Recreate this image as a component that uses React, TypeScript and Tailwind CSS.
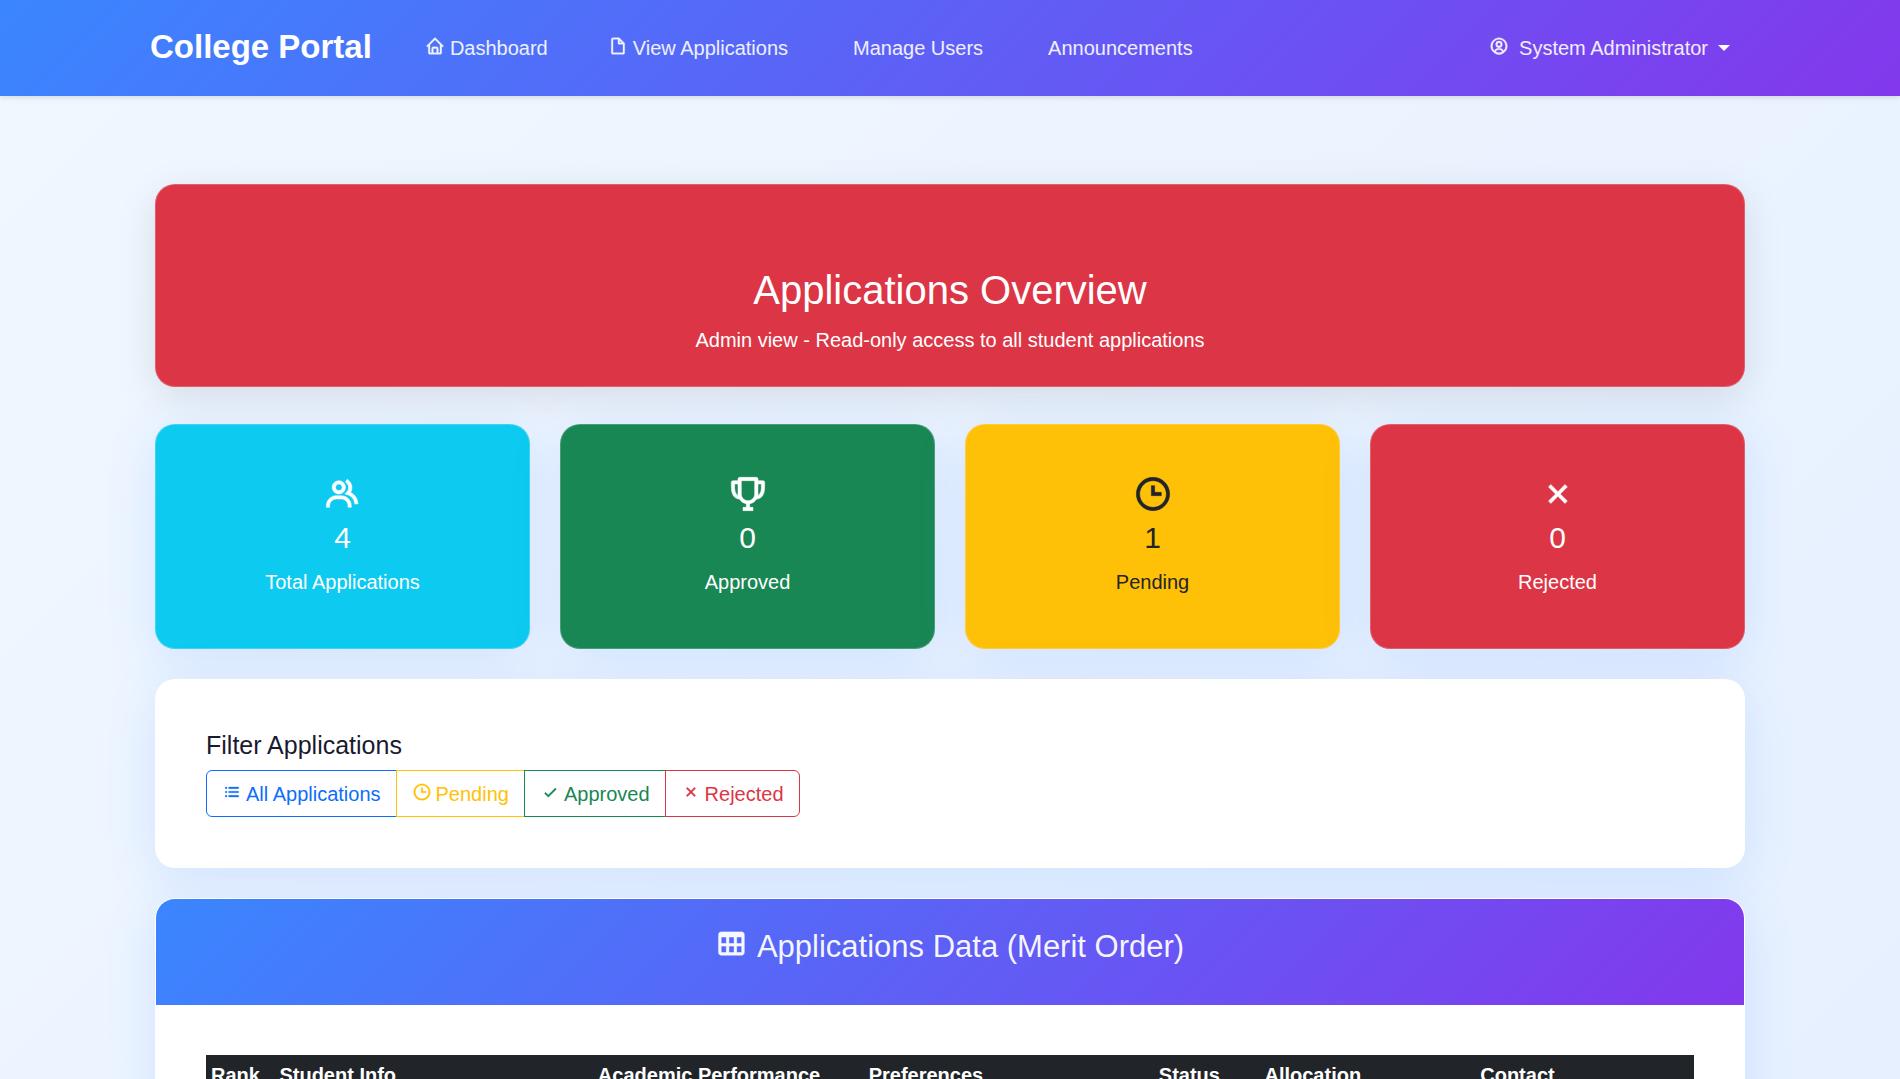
import type { ReactNode } from "react";
import type { IconType } from "react-icons";
import {
  BiCheck,
  BiFileBlank,
  BiGroup,
  BiHome,
  BiListUl,
  BiTable,
  BiTime,
  BiTrophy,
  BiUserCircle,
  BiX,
} from "react-icons/bi";

const cardBase =
  "relative rounded-[20px] border border-white/20 shadow-[0_10px_50px_rgba(58,134,255,0.15)]";

function NavLink({ icon: Icon, children }: { icon?: IconType; children: ReactNode }) {
  return (
    <a href="#" className="whitespace-nowrap text-white/90 hover:text-white">
      {Icon && <Icon className="inline stroke-[0.4] align-[-1px]" aria-hidden="true" />}
      <span className="ml-[5px]">{children}</span>
    </a>
  );
}

function Navbar() {
  return (
    <nav className="relative bg-[linear-gradient(135deg,#3a86ff,#8338ec)] pt-[23px] pb-[25px] shadow-[0_2px_5px_rgba(0,0,0,0.1)]">
      <div className="mx-auto flex max-w-[1600px] items-center">
        <a href="#" className="text-[33px] leading-[48px] font-bold whitespace-nowrap text-white">
          College Portal
        </a>
        <div className="ml-[53px] flex items-center gap-[60px] pt-0.5">
          <NavLink icon={BiHome}>Dashboard</NavLink>
          <NavLink icon={BiFileBlank}>View Applications</NavLink>
          <NavLink>Manage Users</NavLink>
          <NavLink>Announcements</NavLink>
        </div>
        <button type="button" className="mr-5 ml-auto flex items-center gap-2.5 pt-0.5 text-white/90">
          <span className="whitespace-nowrap">
            <BiUserCircle className="mr-2.5 inline stroke-[0.4] align-[-1px]" aria-hidden="true" />
            System Administrator
          </span>
          <span className="border-x-[6px] border-t-[6px] border-x-transparent border-t-white" />
        </button>
      </div>
    </nav>
  );
}

const stats: { label: string; value: number; icon: IconType; tone: string }[] = [
  { label: "Total Applications", value: 4, icon: BiGroup, tone: "bg-[#0dcaf0] text-white" },
  { label: "Approved", value: 0, icon: BiTrophy, tone: "bg-[#198754] text-white" },
  { label: "Pending", value: 1, icon: BiTime, tone: "bg-[#ffc107] text-[#212529]" },
  { label: "Rejected", value: 0, icon: BiX, tone: "bg-[#dc3545] text-white" },
];

const filters: { label: string; icon: IconType; tone: string }[] = [
  { label: "All Applications", icon: BiListUl, tone: "rounded-l-md border-[#0d6efd] text-[#0d6efd]" },
  { label: "Pending", icon: BiTime, tone: "-ml-px border-[#ffc107] text-[#ffc107]" },
  { label: "Approved", icon: BiCheck, tone: "-ml-px border-[#198754] text-[#198754]" },
  { label: "Rejected", icon: BiX, tone: "-ml-px rounded-r-md border-[#dc3545] text-[#dc3545]" },
];

const columns = [
  { label: "Rank", width: "w-[4.6%]" },
  { label: "Student Info", width: "w-[21.4%]" },
  { label: "Academic Performance", width: "w-[18.2%]" },
  { label: "Preferences", width: "w-[19.5%]" },
  { label: "Status", width: "w-[7.1%]" },
  { label: "Allocation", width: "w-[14.5%]" },
  { label: "Contact", width: "w-[14.7%]" },
];

export default function App() {
  return (
    <div className="min-h-screen bg-[linear-gradient(135deg,#f0f7ff,#e6f0ff)] font-['Liberation_Sans',Arial,sans-serif] text-[20px] leading-[30px] text-[#1a1a2e]">
      <Navbar />
      <main className="pt-[88px]">
        <div className="mx-auto max-w-[1590px]">
          <header className="relative rounded-[20px] border border-white/20 bg-[#dc3545] pt-[81px] pb-[31px] text-center text-white shadow-[0_10px_40px_rgba(0,0,0,0.1)]">
            <h1 className="mb-[11px] text-[40px] leading-[48px]">Applications Overview</h1>
            <p>Admin view - Read-only access to all student applications</p>
          </header>

          <section className="mt-[37px] grid grid-cols-4 gap-[30px]">
            {stats.map(({ label, value, icon: Icon, tone }) => (
              <article
                key={label}
                className={`flex flex-col items-center pt-[49px] pb-[51px] text-center ${cardBase} ${tone}`}
              >
                <Icon className="size-10 stroke-[0.3]" aria-hidden="true" />
                <h2 className="mt-[6px] text-[30px] leading-9">{value}</h2>
                <p className="mt-[11px]">{label}</p>
              </article>
            ))}
          </section>

          <section className={`mt-[30px] bg-white p-[50px] ${cardBase}`}>
            <h2 className="mb-2.5 text-[25px] leading-[30px]">Filter Applications</h2>
            <div className="flex" role="group" aria-label="Filter applications">
              {filters.map(({ label, icon: Icon, tone }) => (
                <button
                  key={label}
                  type="button"
                  className={`border px-[15px] pt-2 pb-[7px] whitespace-nowrap ${tone}`}
                >
                  <Icon className="mr-1 inline stroke-[0.3] align-[-1px]" aria-hidden="true" />
                  {label}
                </button>
              ))}
            </div>
          </section>

          <section className={`mt-[30px] overflow-hidden bg-white ${cardBase}`}>
            <div className="bg-[linear-gradient(135deg,#3a86ff,#8338ec)] pt-[29px] pb-10 text-center">
              <h2 className="text-[31px] leading-9 text-white/95">
                <BiTable className="mr-2.5 inline size-[31px] stroke-[0.4] align-[-2px]" aria-hidden="true" />
                Applications Data (Merit Order)
              </h2>
            </div>
            <div className="p-[50px]">
              <table className="w-full table-fixed border-collapse">
                <thead className="bg-[#212529] text-left text-white">
                  <tr>
                    {columns.map(({ label, width }) => (
                      <th key={label} scope="col" className={`p-[5px] font-bold whitespace-nowrap ${width}`}>
                        {label}
                      </th>
                    ))}
                  </tr>
                </thead>
              </table>
            </div>
          </section>
        </div>
      </main>
    </div>
  );
}
